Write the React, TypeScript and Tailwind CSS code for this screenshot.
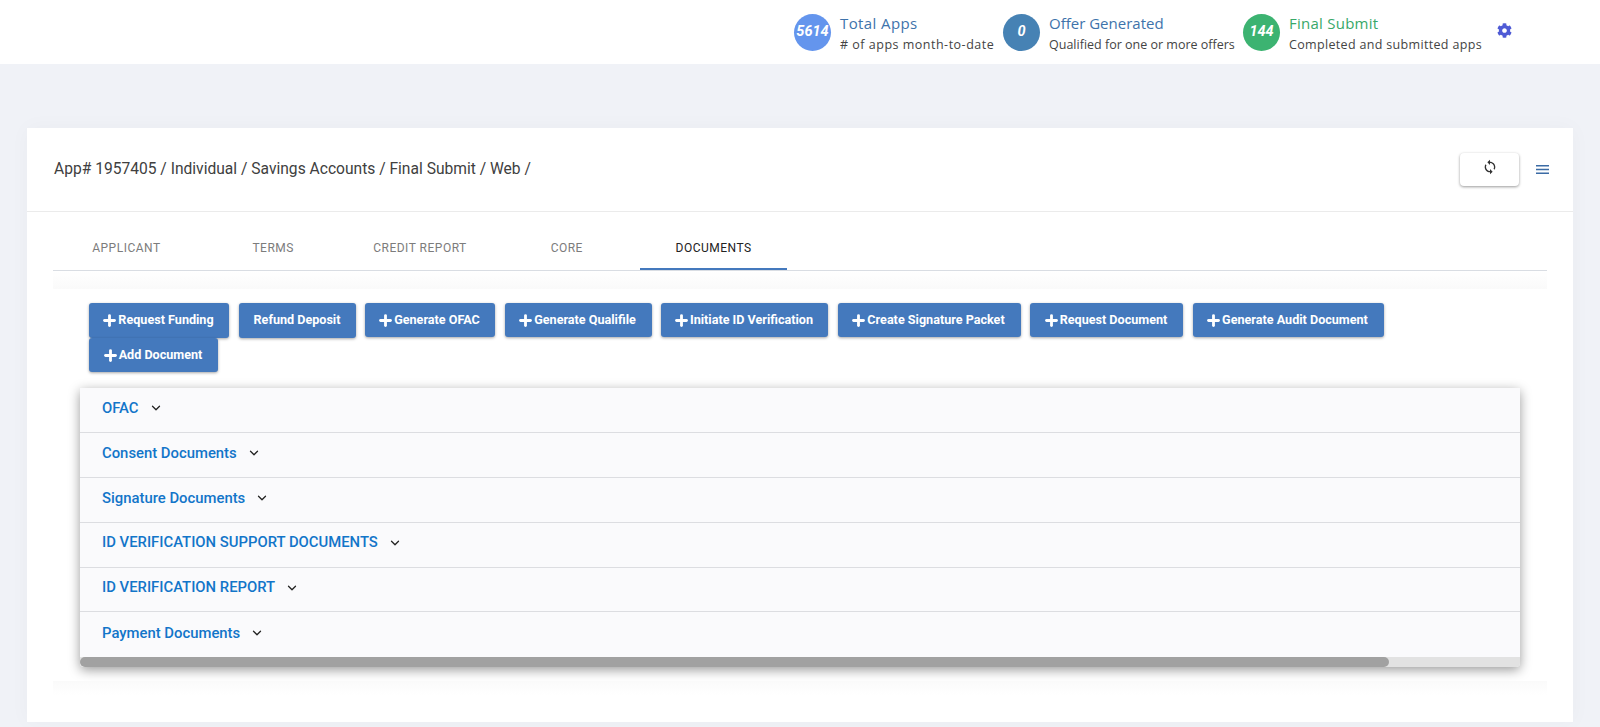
import React from 'react';
import { ChevronDown, Plus } from 'lucide-react';
import { FaCog } from 'react-icons/fa';
import { MdSync } from 'react-icons/md';

const stats = [
  { value: '5614', title: 'Total Apps', sub: '# of apps month-to-date', w: 'w-[209px]', circle: 'bg-[#6495ed]', color: 'text-[#3e73ab]', titleTrack: 'tracking-[0.4px]', subTrack: 'tracking-[0.5px]' },
  { value: '0', title: 'Offer Generated', sub: 'Qualified for one or more offers', w: 'w-[240px]', circle: 'bg-[#4682b4]', color: 'text-[#3e73ab]', titleTrack: '', subTrack: '' },
  { value: '144', title: 'Final Submit', sub: 'Completed and submitted apps', w: 'w-[254px]', circle: 'bg-[#3cb371]', color: 'text-[#38a869]', titleTrack: 'tracking-[0.25px]', subTrack: 'tracking-[0.33px]' },
];

const tabs = ['APPLICANT', 'TERMS', 'CREDIT REPORT', 'CORE', 'DOCUMENTS'];

const buttons = [
  { label: 'Request Funding', icon: true, w: 'w-[140px]', h: 'h-[35px]' },
  { label: 'Refund Deposit', icon: false, w: 'w-[117px]', h: 'h-[35px]' },
  { label: 'Generate OFAC', icon: true, w: 'w-[130px]', h: 'h-[34px]' },
  { label: 'Generate Qualifile', icon: true, w: 'w-[147px]', h: 'h-[34px]' },
  { label: 'Initiate ID Verification', icon: true, w: 'w-[167px]', h: 'h-[34px]' },
  { label: 'Create Signature Packet', icon: true, w: 'w-[183px]', h: 'h-[34px]' },
  { label: 'Request Document', icon: true, w: 'w-[153px]', h: 'h-[34px]' },
  { label: 'Generate Audit Document', icon: true, w: 'w-[191px]', h: 'h-[34px]' },
  { label: 'Add Document', icon: true, w: 'w-[129px]', h: 'h-[34px]' },
];

const sections = [
  'OFAC',
  'Consent Documents',
  'Signature Documents',
  'ID VERIFICATION SUPPORT DOCUMENTS',
  'ID VERIFICATION REPORT',
  'Payment Documents',
];

const App = () => {
  return (
    <div className="h-[727px] overflow-hidden bg-[#f0f2f7] font-['Roboto',sans-serif]">
      <header className="flex h-[64px] items-center bg-white pl-[794px]">
        {stats.map((stat) => (
          <div key={stat.title} className={`flex items-center ${stat.w}`}>
            <div className={`flex h-[37px] w-[37px] shrink-0 items-center justify-center rounded-full text-[14.5px] font-bold italic text-white ${stat.circle}`}>
              {stat.value}
            </div>
            <div className="ml-[9px] pt-[2px] font-['Open_Sans',sans-serif]">
              <div className={`text-[15px] leading-[20px] ${stat.color} ${stat.titleTrack}`}>{stat.title}</div>
              <div className={`mt-[4px] text-[12.5px] leading-[16px] whitespace-nowrap text-[#444444] ${stat.subTrack}`}>{stat.sub}</div>
            </div>
          </div>
        ))}
        <FaCog className="mb-[3px] h-[15px] w-[15px] text-[#4f5bd5]" />
      </header>

      <main className="mx-[27px] mt-[64px] w-[1546px] bg-white shadow-[0_0_20px_rgba(0,0,0,0.03)]">
        <div className="flex h-[84px] items-center border-b border-[#ebebeb] pl-[27px]">
          <div className="text-[15.6px] text-[#404040]">App# 1957405 / Individual / Savings Accounts / Final Submit / Web /</div>
          <button className="ml-auto flex h-[33px] w-[59px] items-center justify-center rounded-[4px] bg-white shadow-[0_1px_3px_rgba(0,0,0,0.4)]">
            <MdSync className="mb-[5px] h-[16px] w-[16px] text-[#333333]" />
          </button>
          <svg className="mr-[24px] ml-[17px] h-[9px] w-[13px] text-[#3b6ba5]" viewBox="0 0 13 9" fill="currentColor">
            <rect x="0" y="0" width="13" height="1.5" />
            <rect x="0" y="3.75" width="13" height="1.5" />
            <rect x="0" y="7.5" width="13" height="1.5" />
          </svg>
        </div>

        <div className="mx-[26px] mt-[14px] w-[1494px]">
          <div className="flex h-[45px] border-b border-[#d9dde3]">
            {tabs.map((tab) => (
              <div
                key={tab}
                className={`flex h-[44px] w-[146.8px] items-center justify-center text-[12px] tracking-[0.5px] ${
                  tab === 'DOCUMENTS' ? 'border-b-2 border-[#4479bd] pt-[2px] text-[#222222]' : 'text-[#7c7c7c]'
                }`}
              >
                {tab}
              </div>
            ))}
          </div>
          <div className="h-[18px] bg-gradient-to-b from-white to-[#fafafa]" />

          <div className="flex flex-wrap items-start gap-x-[9.5px] pt-[14px] pr-[50px] pl-[36px]">
            {buttons.map((b) => (
              <button
                key={b.label}
                className={`flex items-center justify-center rounded-[3px] bg-[#4479bd] text-[12.6px] font-bold whitespace-nowrap text-white shadow-[0_1px_3px_rgba(0,0,0,0.35)] ${b.w} ${b.h}`}
              >
                {b.icon && <Plus className="-ml-[3px] h-[17px] w-[17px]" strokeWidth={4} />}
                {b.label}
              </button>
            ))}
          </div>

          <div className="mt-[16px] ml-[27px] w-[1440px] overflow-hidden rounded-b-[4px] bg-[#fafafc] shadow-[0_3px_12px_rgba(0,0,0,0.4)]">
            {sections.map((name, i) => (
              <div
                key={name}
                className={`flex h-[44.9px] items-center pb-[4px] pl-[22px] ${i < sections.length - 1 ? 'border-b border-[#dcdde1]' : ''}`}
              >
                <span className="text-[14.85px] font-medium text-[#1275c9]">{name}</span>
                <ChevronDown className="ml-[10px] h-[14px] w-[14px] text-[#222222]" strokeWidth={2.2} />
              </div>
            ))}
            <div className="h-[10px] bg-[#e2e2e2]">
              <div className="h-full w-[1309px] rounded-[5px] bg-[#a1a1a1]" />
            </div>
          </div>
          <div className="mt-[14px] h-[14px] bg-gradient-to-b from-[#fafafa] to-white" />
        </div>
        <div className="h-[27px]" />
      </main>
    </div>
  );
};

export default App;
